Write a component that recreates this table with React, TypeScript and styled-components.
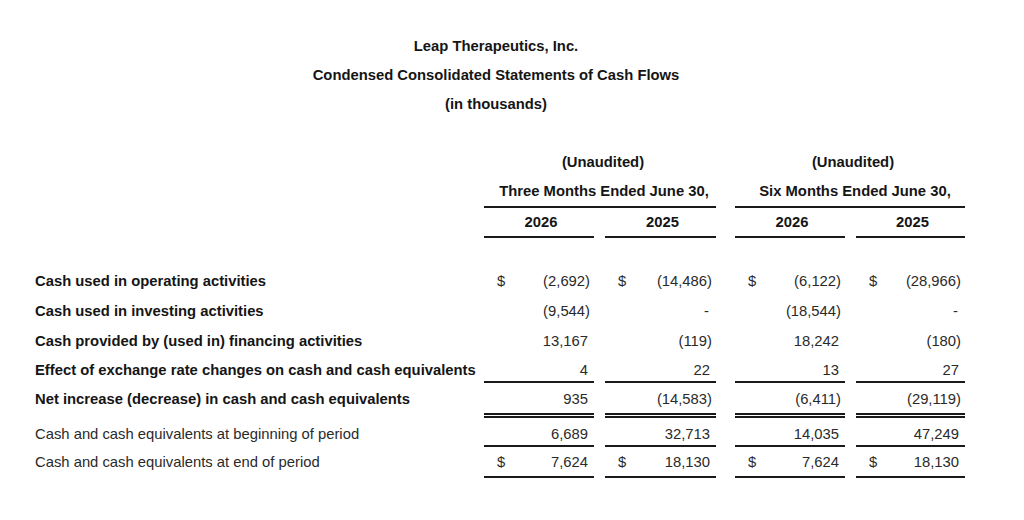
import { createGlobalStyle, styled } from "styled-components";

const GlobalStyle = createGlobalStyle`
	html, body {
		margin: 0;
		padding: 0;
		background: #ffffff;
	}
	body {
		font-family: "Liberation Sans", Arial, sans-serif;
		color: #1c1c1c;
	}
`;

// label + 4 amount columns, with spacer tracks between them
const COLUMNS = "449px 110px 11px 111px 19px 110px 11px 109px";
const AMOUNT_COLS = [2, 4, 6, 8];
const FONT = "14.8px";
const INK = "#1a1a1a";

type Rule = "none" | "single" | "double";

const ruleCss = (rule: Rule) =>
	rule === "single"
		? `border-bottom: 2px solid ${INK};`
		: rule === "double"
			? `border-bottom: 5px double ${INK};`
			: "";

const Sheet = styled.main`
	width: 1024px;
	box-sizing: border-box;
	padding: 32px 0 40px 35px;
`;

const Titles = styled.header`
	width: 922px;
	display: flex;
	flex-direction: column;
	align-items: center;
`;

const TitleLine = styled.div`
	height: 29px;
	line-height: 29px;
	font-size: ${FONT};
	font-weight: 700;
	color: #151515;
`;

const Table = styled.section`
	width: 930px;
	margin-top: 28.5px;
`;

const Row = styled.div<{ $h: number; $gap?: number }>`
	display: grid;
	grid-template-columns: ${COLUMNS};
	height: ${(p) => p.$h}px;
	margin-top: ${(p) => p.$gap ?? 0}px;
`;

const HeadCell = styled.div<{ $col: string; $rule: Rule; $lh: number; $shift: number }>`
	grid-column: ${(p) => p.$col};
	box-sizing: border-box;
	height: 100%;
	padding-left: ${(p) => p.$shift}px;
	text-align: center;
	font-size: ${FONT};
	font-weight: 700;
	line-height: ${(p) => p.$lh}px;
	color: #151515;
	white-space: nowrap;
	${(p) => ruleCss(p.$rule)}
`;

const Label = styled.div<{ $bold: boolean; $pt: number }>`
	grid-column: 1;
	padding-top: ${(p) => p.$pt}px;
	font-size: ${FONT};
	line-height: 16px;
	font-weight: ${(p) => (p.$bold ? 700 : 400)};
	color: ${(p) => (p.$bold ? "#151515" : "#2a2a2a")};
	white-space: nowrap;
`;

const Amount = styled.div<{ $col: number; $pt: number; $rule: Rule; $trail: number }>`
	grid-column: ${(p) => p.$col};
	box-sizing: border-box;
	height: 100%;
	display: flex;
	justify-content: space-between;
	padding: ${(p) => p.$pt}px ${(p) => p.$trail}px 0 13px;
	font-size: ${FONT};
	line-height: 16px;
	color: #2a2a2a;
	${(p) => ruleCss(p.$rule)}
`;

type Line = {
	label: string;
	bold: boolean;
	values: string[];
	dollar?: boolean;
	h: number;
	pt: number;
	rule: Rule;
};

const lines: Line[] = [
	{
		label: "Cash used in operating activities",
		bold: true,
		values: ["(2,692)", "(14,486)", "(6,122)", "(28,966)"],
		dollar: true,
		h: 30,
		pt: 7,
		rule: "none",
	},
	{
		label: "Cash used in investing activities",
		bold: true,
		values: ["(9,544)", "-", "(18,544)", "-"],
		h: 30,
		pt: 7,
		rule: "none",
	},
	{
		label: "Cash provided by (used in) financing activities",
		bold: true,
		values: ["13,167", "(119)", "18,242", "(180)"],
		h: 29,
		pt: 6.5,
		rule: "none",
	},
	{
		label: "Effect of exchange rate changes on cash and cash equivalents",
		bold: true,
		values: ["4", "22", "13", "27"],
		h: 28,
		pt: 7,
		rule: "single",
	},
	{
		label: "Net increase (decrease) in cash and cash equivalents",
		bold: true,
		values: ["935", "(14,583)", "(6,411)", "(29,119)"],
		h: 35,
		pt: 8,
		rule: "double",
	},
	{
		label: "Cash and cash equivalents at beginning of period",
		bold: false,
		values: ["6,689", "32,713", "14,035", "47,249"],
		h: 29,
		pt: 7.5,
		rule: "single",
	},
	{
		label: "Cash and cash equivalents at end of period",
		bold: false,
		values: ["7,624", "18,130", "7,624", "18,130"],
		dollar: true,
		h: 31,
		pt: 7,
		rule: "single",
	},
];

const years = ["2026", "2025", "2026", "2025"];

function App() {
	return (
		<>
			<GlobalStyle />
			<Sheet>
				<Titles>
					<TitleLine>Leap Therapeutics, Inc.</TitleLine>
					<TitleLine>Condensed Consolidated Statements of Cash Flows</TitleLine>
					<TitleLine>(in thousands)</TitleLine>
				</Titles>
				<Table>
					{/* period headers */}
					<Row $h={29}>
						<HeadCell $col="2 / 5" $rule="none" $lh={29} $shift={6}>
							(Unaudited)
						</HeadCell>
						<HeadCell $col="6 / 9" $rule="none" $lh={29} $shift={6}>
							(Unaudited)
						</HeadCell>
					</Row>
					<Row $h={31}>
						<HeadCell $col="2 / 5" $rule="single" $lh={29} $shift={8}>
							Three Months Ended June 30,
						</HeadCell>
						<HeadCell $col="6 / 9" $rule="single" $lh={29} $shift={10}>
							Six Months Ended June 30,
						</HeadCell>
					</Row>
					<Row $h={30}>
						{years.map((y, i) => (
							<HeadCell
								key={i}
								$col={String(AMOUNT_COLS[i])}
								$rule="single"
								$lh={28}
								$shift={4}
							>
								{y}
							</HeadCell>
						))}
					</Row>

					{/* statement lines */}
					{lines.map((line, r) => (
						<Row key={line.label} $h={line.h} $gap={r === 0 ? 28.5 : 0}>
							<Label $bold={line.bold} $pt={line.pt}>
								{line.label}
							</Label>
							{line.values.map((v, i) => (
								<Amount
									key={i}
									$col={AMOUNT_COLS[i]}
									$pt={line.pt}
									$rule={line.rule}
									$trail={v.startsWith("(") ? 4 : v === "-" ? 7 : 6}
								>
									<span>{line.dollar ? "$" : ""}</span>
									<span>{v}</span>
								</Amount>
							))}
						</Row>
					))}
				</Table>
			</Sheet>
		</>
	);
}

export default App;
